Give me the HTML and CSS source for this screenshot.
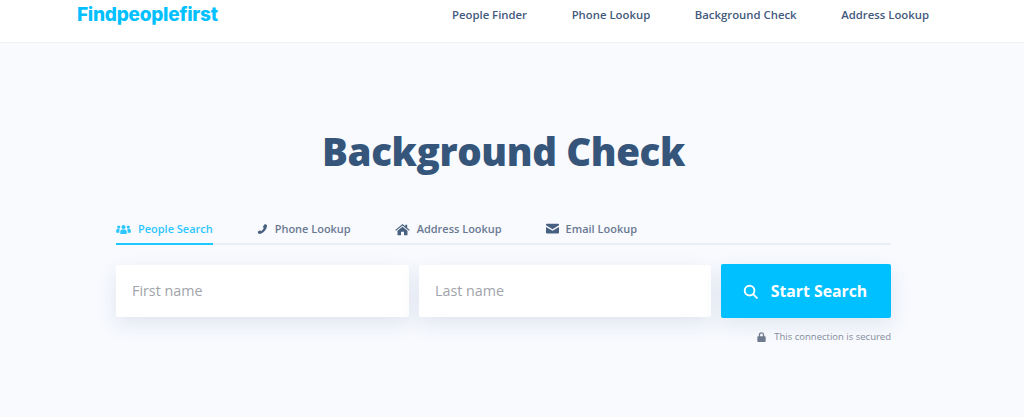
FILE: index.html
```html
<!DOCTYPE html>
<html lang="en">
<head>
<meta charset="utf-8">
<title>Background Check</title>
<link rel="stylesheet" href="styles.css">
</head>
<body>
<header class="topbar">
  <a class="logo" href="#">Findpeoplefirst</a>
  <nav class="mainnav">
    <a href="#">People Finder</a>
    <a href="#">Phone Lookup</a>
    <a href="#">Background Check</a>
    <a href="#">Address Lookup</a>
  </nav>
</header>
<main class="hero">
  <h1 class="title">Background Check</h1>
  <div class="panel">
    <div class="tabs">
      <a class="tab active" href="#">
        <svg class="tabicon" viewBox="0 0 16 12" width="15" height="12"><path fill="currentColor" d="M8 1.6a2.2 2.2 0 1 1 0 4.4 2.2 2.2 0 0 1 0-4.4zM2.900 2.200a1.700 1.700 0 1 1 0 3.400 1.700 1.700 0 0 1 0-3.400zm10.200 0a1.700 1.700 0 1 1 0 3.400 1.700 1.700 0 0 1 0-3.400zM4.600 11.200V8.600C4.600 7.200 5.600 6.400 6.600 6.400h2.800c1 0 2 .8 2 2.200v2.600zM3.600 10H.2V7.600c0-1 .7-1.600 1.500-1.600h2.200c-.3.500-.3 1.200-.3 2.600zm8.800 0h3.400V7.600c0-1-.7-1.600-1.500-1.600h-2.200c.3.500.3 1.200.3 2.600z"/></svg>
        People Search
      </a>
      <a class="tab" href="#">
        <svg class="tabicon" viewBox="0 0 12 12" width="11" height="12"><path fill="currentColor" d="M8.600.6l2.300 1c.2 4.800-4 9.700-9.100 9.800l-1.100-2.300 2.600-1.700 1.100 1c1.400-.8 2.400-2 3-3.400L6.300 3.600z"/></svg>
        Phone Lookup
      </a>
      <a class="tab" href="#">
        <svg class="tabicon" viewBox="0 0 16 13" width="15" height="13"><path fill="currentColor" d="M8 .5l3 2.500V1.300h2v3.400l2.700 2.300-.8.900L8 2.200 1.100 7.900l-.8-.9zM8 3.500l5.300 4.400v4.700H9.600V9H6.400v3.600H2.700V7.900z"/></svg>
        Address Lookup
      </a>
      <a class="tab" href="#">
        <svg class="tabicon" viewBox="0 0 14 11" width="13" height="11"><path fill="currentColor" d="M1 .5h12c.5 0 1 .4 1 1v.6L7 6.200 0 2.100v-.6c0-.6.500-1 1-1zM0 3.800l7 4 7-4v6c0 .6-.5 1-1 1H1c-.5 0-1-.4-1-1z"/></svg>
        Email Lookup
      </a>
    </div>
    <form class="searchform">
      <input class="field" type="text" placeholder="First name">
      <input class="field" type="text" placeholder="Last name">
      <button class="submit" type="button">
        <svg viewBox="0 0 16 16" width="15" height="15"><circle cx="7" cy="7" r="5.200" fill="none" stroke="currentColor" stroke-width="2"/><path d="M11 11l3.800 3.800" stroke="currentColor" stroke-width="2" stroke-linecap="round"/></svg>
        <span>Start Search</span>
      </button>
    </form>
    <p class="secure">
      <svg viewBox="0 0 10 12" width="9" height="10"><path fill="currentColor" d="M1 5h.8V3.500a3.200 3.200 0 0 1 6.400 0V5H9c.5 0 1 .4 1 1v5c0 .6-.5 1-1 1H1c-.5 0-1-.4-1-1V6c0-.6.500-1 1-1zm2.300 0h3.400V3.500a1.700 1.700 0 0 0-3.400 0z"/></svg>
      <span>This connection is secured</span>
    </p>
  </div>
</main>
</body>
</html>
```
FILE: styles.css
```css
* { box-sizing: border-box; }
html, body { height: 100%; }
body {
  margin: 0;
  background: #f8fafe;
  font-family: "Open Sans", "Liberation Sans", sans-serif;
  color: #3a5478;
  overflow: hidden;
}
a { text-decoration: none; color: inherit; }

.topbar {
  height: 43px;
  background: #fff;
  border-bottom: 1px solid #f0f2f7;
  display: flex;
  justify-content: space-between;
  padding: 0 95px 0 77px;
}
.logo {
  font-family: "Inter", sans-serif;
  font-weight: 800;
  font-size: 19px;
  letter-spacing: -.25px;
  line-height: 30px;
  font-variant-ligatures: none;
  color: #00c0ff;
}
.mainnav {
  display: flex;
  gap: 44.600px;
  font-size: 11.350px;
  font-weight: 600;
  line-height: 30px;
  color: #43597c;
}

.hero {
  display: flex;
  flex-direction: column;
  align-items: center;
  width: 1007px;
}
.title {
  margin: 84px 0 0;
  font-size: 38.500px;
  letter-spacing: -.38px;
  line-height: 48px;
  font-weight: 800;
  color: #36557b;
}
.panel { width: 775px; margin-top: 41px; }

.tabs {
  display: flex;
  gap: 44px;
  border-bottom: 2px solid #e9edf4;
  height: 29px;
}
.tab {
  display: flex;
  align-items: flex-start;
  gap: 7px;
  height: 29px;
  padding-top: 5px;
  font-size: 10.980px;
  font-weight: 600;
  line-height: 16px;
  color: #6a7992;
}
.tabicon { color: #47607f; margin-top: 2px; }
.tab.active { color: #2cc6ff; border-bottom: 2px solid #1ec8ff; }
.tab.active .tabicon { color: #2cc6ff; }

.searchform {
  display: flex;
  align-items: center;
  gap: 10px;
  margin-top: 19px;
}
.field {
  width: 293px;
  height: 52px;
  border: 0;
  border-radius: 2px;
  background: #fff;
  padding: 0 16px 2px;
  font: 400 14.300px "Open Sans", sans-serif;
  box-shadow: 0 7px 20px rgba(60, 80, 130, .12);
  outline: 0;
}
.field:nth-child(2) { width: 292px; }
.field::placeholder { color: #a0a4aa; opacity: 1; }
.submit {
  flex: 1;
  height: 54px;
  border: 0;
  border-radius: 2px;
  padding: 0 2px 0 0;
  background: #00c0ff;
  color: #fff;
  display: flex;
  align-items: center;
  justify-content: center;
  gap: 13px;
  font: 700 15.800px "Open Sans", sans-serif;
  box-shadow: 0 7px 20px rgba(60, 80, 130, .12);
}

.secure {
  margin: 12px 0 0;
  display: flex;
  justify-content: flex-end;
  align-items: center;
  gap: 8px;
  font-size: 9.500px;
  line-height: 14px;
  color: #838b9c;
}
.secure svg { color: #6f7a8f; }
```
